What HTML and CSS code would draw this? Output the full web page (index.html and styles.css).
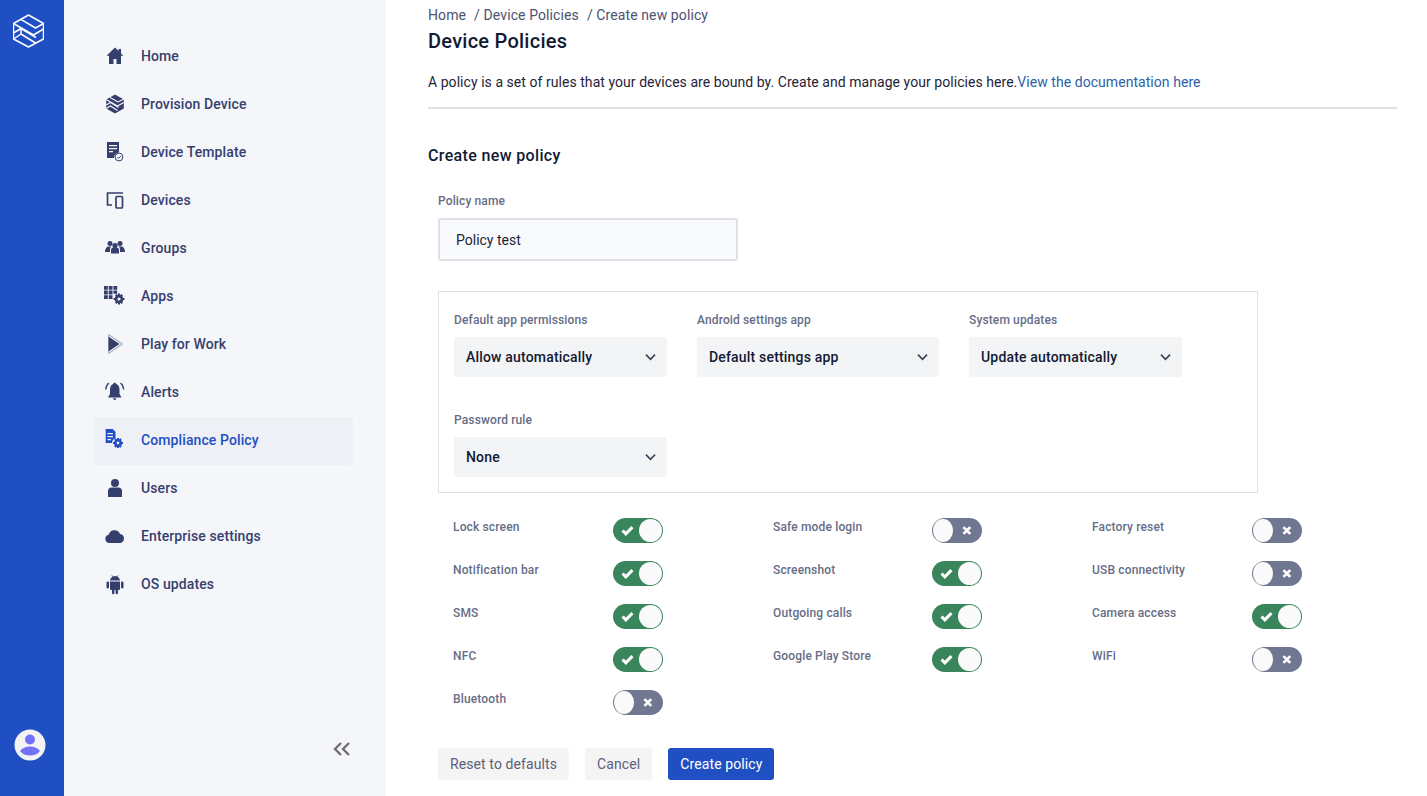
FILE: index.html

```html
<!DOCTYPE html>
<html lang="en">
<head>
	<meta charset="utf-8">
	<title>Device Policies</title>
	<link rel="stylesheet" href="styles.css">
</head>
<body>
	<div class="app">
		<aside class="rail">
			<svg class="logo" viewBox="0 0 31 34" width="31" height="34" fill="none" stroke="#fff" stroke-width="1.500" stroke-linejoin="round">
				<path d="M15.500 1 30.500 9.500V25L15.500 33 .5 25V9.500Z"/>
				<path d="M.5 9.500 20.500 21 30.500 15M7.500 5.200 22.500 14 30.500 9.500M.5 19 8 14.500 23 23.500M8 14.500V20M.5 25 8 20 22.500 29"/>
			</svg>
			<svg class="avatar" viewBox="0 0 32 32" width="32" height="32">
				<circle cx="16" cy="16" r="15.500" fill="#f3f3f5"/>
				<circle cx="16" cy="10.500" r="5" fill="#7272f8"/>
				<path d="M6 22c2-3 6-4.500 10-4.500s8 1.500 10 4.500c-2 3-6 4.500-10 4.500S8 25 6 22Z" fill="#7272f8"/>
			</svg>
		</aside>

		<nav class="sidebar">
			<ul class="nav">
				<li class="nav-item">
					<svg class="nav-icon" viewBox="0 0 20 20"><path d="M10 1.500 1.500 9.800H4V18h4.500v-5h3v5H16V9.800h2.500L16 7.400V3h-2.500v2Z"/></svg>
					Home
				</li>
				<li class="nav-item">
					<svg class="nav-icon" viewBox="0 0 20 20" fill="none"><path d="M10 .5 18.800 5.400V14.600L10 19.500 1.200 14.600V5.400Z" fill="currentColor"/><path d="M1.200 5.500 12.500 12 18.800 8.500M1.200 11 5.500 8.500 13.500 13.500M1.200 14.500 5.500 12 12.500 16.500M5 3.500 13 8 18.800 5" stroke="#f5f6f9" stroke-width="1.100"/></svg>
					Provision Device
				</li>
				<li class="nav-item">
					<svg class="nav-icon" viewBox="0 0 20 20"><path d="M2 0h12v10.600a5 5 0 0 0-5 5.400H2ZM4 3v1.300h8V3Zm0 3v1.300h8V6Zm0 3v1.300h4V9Z"/><circle cx="14" cy="15" r="3.900" fill="none" stroke="currentColor"/><path d="m12.300 15 1.300 1.300 2.300-2.300" fill="none" stroke="currentColor"/></svg>
					Device Template
				</li>
				<li class="nav-item">
					<svg class="nav-icon" viewBox="0 0 20 20" fill="none"><path d="M18 3H2.500v12H7" stroke="currentColor" stroke-width="1.700" fill="none"/><rect x="11" y="6.500" width="6.500" height="11.500" rx="1" stroke="currentColor" stroke-width="1.700" fill="none"/></svg>
					Devices
				</li>
				<li class="nav-item">
					<svg class="nav-icon" viewBox="0 0 20 20"><circle cx="5" cy="5.500" r="2.500"/><circle cx="15" cy="5.500" r="2.500"/><circle cx="10" cy="7.500" r="2.600"/><path d="M0 14c0-3 1.500-5.500 3.500-5.500h2.700A4 4 0 0 0 5 11v3ZM20 14c0-3-1.500-5.500-3.500-5.500h-2.700A4 4 0 0 1 15 11v3ZM6 15.500V12c0-1.500 1-2.500 2.500-2.500h3c1.500 0 2.500 1 2.500 2.500v3.500Z"/></svg>
					Groups
				</li>
				<li class="nav-item">
					<svg class="nav-icon" viewBox="0 0 20 20"><path d="M-1 0h3.800v3.800H-1ZM3.700 0h3.800v3.800H3.700ZM8.400 0h3.800v3.800H8.400ZM-1 4.600h3.800v3.800H-1ZM3.700 4.600h3.800v3.800H3.700ZM8.400 4.600h3.800v3.200H8.400ZM-1 9.200h3.800V13H-1ZM3.700 9.200h3.800V13H3.700Z"/><circle cx="14" cy="13" r="3" fill="none" stroke="currentColor" stroke-width="2.800"/><path d="M13 7.500h2v2h-2ZM13 16.500h2v2h-2ZM8.500 12h2v2h-2ZM17.500 12h2v2h-2ZM10 9.500l1.400-1.400 1.400 1.400-1.400 1.400ZM18 9.500l-1.400-1.400-1.400 1.400 1.400 1.400ZM10 16.500l1.400 1.400 1.400-1.400-1.400-1.400ZM18 16.500l-1.400 1.400-1.400-1.400 1.400-1.400Z"/></svg>
					Apps
				</li>
				<li class="nav-item">
					<svg class="nav-icon" viewBox="0 0 20 20"><path d="M3.500 0v20L18 10ZM4.300 1.600 16.500 10 4.300 18.400Z" opacity=".55"/><path d="M3.500 2.500v15L14.500 10Z"/></svg>
					Play for Work
				</li>
				<li class="nav-item">
					<svg class="nav-icon" viewBox="0 0 20 20"><path d="M9.700.7c1 0 1.500.7 1.500 1.400 2.300.7 3.300 3 3.300 5.400v4.500l2 3.500H3l2-3.500V7.500c0-2.400 1-4.700 3.200-5.400C8.200 1.400 8.700.7 9.700.7ZM8 16.300h3.400a1.700 1.700 0 0 1-3.400 0Z"/><path d="M3.800 1C1.800 2.800.8 5 .8 7.500M15.600 1c2 1.800 3 4 3 6.500" fill="none" stroke="currentColor" stroke-width="1.300"/></svg>
					Alerts
				</li>
				<li class="nav-item active">
					<svg class="nav-icon" viewBox="0 0 20 20"><path d="M.7-1h7l2.800 2.800v6.400A5.500 5.500 0 0 0 7 13H.7ZM2.500 3v1.200H8V3Zm0 3v1.200H8V6Zm0 3v1.200h3.500V9Z"/><circle cx="13" cy="13" r="2.700" fill="none" stroke="currentColor" stroke-width="2.600"/><path d="M12 8h2v2h-2ZM12 16h2v2h-2ZM8 12h2v2H8ZM16 12h2v2h-2ZM9.300 9.600l1.300-1.300 1.300 1.300-1.300 1.300ZM16.700 9.600l-1.300-1.300-1.300 1.300 1.300 1.300ZM9.300 16.400l1.300 1.300 1.300-1.300-1.300-1.300ZM16.700 16.400l-1.300 1.300-1.300-1.300 1.300-1.300Z"/></svg>
					Compliance Policy
				</li>
				<li class="nav-item">
					<svg class="nav-icon" viewBox="0 0 20 20"><circle cx="10" cy="5" r="4"/><path d="M3 19v-6c0-2 1.500-3.500 3.500-3.500h7C15.500 9.500 17 11 17 13v6Z"/></svg>
					Users
				</li>
				<li class="nav-item">
					<svg class="nav-icon" viewBox="0 0 20 20"><path d="M4.500 17a4.200 4.200 0 0 1-.8-8.300A6 6 0 0 1 15 8a4.600 4.600 0 0 1 .5 9Z"/></svg>
					Enterprise settings
				</li>
				<li class="nav-item">
					<svg class="nav-icon android" viewBox="0 0 20 20"><path d="M5 6.500a5 5 0 0 1 2.400-3.800L6.500 1.200l.4-.3 1 1.500a5 5 0 0 1 4.200 0l1-1.500.4.300-.9 1.500A5 5 0 0 1 15 6.500ZM5 7.500h10V15a1 1 0 0 1-1 1h-1v3a1.200 1.200 0 0 1-2.400 0v-3H9.400v3A1.200 1.200 0 0 1 7 19v-3H6a1 1 0 0 1-1-1ZM2.700 7.500A1.200 1.200 0 0 1 4 8.700v4.600a1.200 1.200 0 0 1-2.500 0V8.700a1.200 1.200 0 0 1 1.200-1.200ZM17.300 7.500a1.200 1.200 0 0 1 1.200 1.200v4.600a1.200 1.200 0 0 1-2.500 0V8.700a1.200 1.200 0 0 1 1.300-1.200Z"/></svg>
					OS updates
				</li>
			</ul>
			<div class="collapse">
				<svg viewBox="0 0 18 14" width="18" height="14" fill="none" stroke="#6f6f6f" stroke-width="2.400"><path d="M8 1 2 7l6 6M16 1l-6 6 6 6"/></svg>
			</div>
		</nav>

		<main class="main">
			<div class="crumbs">
				<span>Home</span><span>/ Device Policies</span><span>/ Create new policy</span>
			</div>
			<h1 class="title">Device Policies</h1>
			<p class="intro">A policy is a set of rules that your devices are bound by. Create and manage your policies here.<a class="link" href="#">View the documentation here</a></p>
			<hr class="rule">
			<h2 class="subtitle">Create new policy</h2>

			<div class="form">
				<label class="label">Policy name</label>
				<div class="input">Policy test</div>

				<div class="panel">
					<div class="field">
						<label class="label">Default app permissions</label>
						<div class="select narrow">Allow automatically<svg class="chevron" viewBox="0 0 12 8"><path d="M1 1.500 6 6.500l5-5"/></svg></div>
					</div>
					<div class="field">
						<label class="label">Android settings app</label>
						<div class="select wide">Default settings app<svg class="chevron" viewBox="0 0 12 8"><path d="M1 1.500 6 6.500l5-5"/></svg></div>
					</div>
					<div class="field">
						<label class="label">System updates</label>
						<div class="select narrow">Update automatically<svg class="chevron" viewBox="0 0 12 8"><path d="M1 1.500 6 6.500l5-5"/></svg></div>
					</div>
					<div class="field">
						<label class="label">Password rule</label>
						<div class="select narrow">None<svg class="chevron" viewBox="0 0 12 8"><path d="M1 1.500 6 6.500l5-5"/></svg></div>
					</div>
				</div>

				<div class="toggles">
					<div class="toggle-row"><span class="toggle-label">Lock screen</span><span class="toggle on"><svg class="mark" viewBox="0 0 12 10"><path d="m1.500 5 3 3 6-6"/></svg><i class="knob"></i></span></div>
					<div class="toggle-row"><span class="toggle-label">Safe mode login</span><span class="toggle"><i class="knob"></i><svg class="mark" viewBox="0 0 10 10"><path d="m1.500 1.500 7 7m0-7-7 7"/></svg></span></div>
					<div class="toggle-row"><span class="toggle-label">Factory reset</span><span class="toggle"><i class="knob"></i><svg class="mark" viewBox="0 0 10 10"><path d="m1.500 1.500 7 7m0-7-7 7"/></svg></span></div>

					<div class="toggle-row"><span class="toggle-label">Notification bar</span><span class="toggle on"><svg class="mark" viewBox="0 0 12 10"><path d="m1.500 5 3 3 6-6"/></svg><i class="knob"></i></span></div>
					<div class="toggle-row"><span class="toggle-label">Screenshot</span><span class="toggle on"><svg class="mark" viewBox="0 0 12 10"><path d="m1.500 5 3 3 6-6"/></svg><i class="knob"></i></span></div>
					<div class="toggle-row"><span class="toggle-label">USB connectivity</span><span class="toggle"><i class="knob"></i><svg class="mark" viewBox="0 0 10 10"><path d="m1.500 1.500 7 7m0-7-7 7"/></svg></span></div>

					<div class="toggle-row"><span class="toggle-label">SMS</span><span class="toggle on"><svg class="mark" viewBox="0 0 12 10"><path d="m1.500 5 3 3 6-6"/></svg><i class="knob"></i></span></div>
					<div class="toggle-row"><span class="toggle-label">Outgoing calls</span><span class="toggle on"><svg class="mark" viewBox="0 0 12 10"><path d="m1.500 5 3 3 6-6"/></svg><i class="knob"></i></span></div>
					<div class="toggle-row"><span class="toggle-label">Camera access</span><span class="toggle on"><svg class="mark" viewBox="0 0 12 10"><path d="m1.500 5 3 3 6-6"/></svg><i class="knob"></i></span></div>

					<div class="toggle-row"><span class="toggle-label">NFC</span><span class="toggle on"><svg class="mark" viewBox="0 0 12 10"><path d="m1.500 5 3 3 6-6"/></svg><i class="knob"></i></span></div>
					<div class="toggle-row"><span class="toggle-label">Google Play Store</span><span class="toggle on"><svg class="mark" viewBox="0 0 12 10"><path d="m1.500 5 3 3 6-6"/></svg><i class="knob"></i></span></div>
					<div class="toggle-row"><span class="toggle-label">WiFi</span><span class="toggle"><i class="knob"></i><svg class="mark" viewBox="0 0 10 10"><path d="m1.500 1.500 7 7m0-7-7 7"/></svg></span></div>

					<div class="toggle-row"><span class="toggle-label">Bluetooth</span><span class="toggle"><i class="knob"></i><svg class="mark" viewBox="0 0 10 10"><path d="m1.500 1.500 7 7m0-7-7 7"/></svg></span></div>
				</div>

				<div class="actions">
					<button class="btn">Reset to defaults</button>
					<button class="btn">Cancel</button>
					<button class="btn primary">Create policy</button>
				</div>
			</div>
		</main>
	</div>
</body>
</html>
```

FILE: styles.css

```css
* {
	box-sizing: border-box;
}
html, body {
	height: 100%;
}
body {
	margin: 0;
	overflow: hidden;
	background: #fff;
	color: #121a33;
	font-family: Roboto, "Liberation Sans", sans-serif;
	font-size: 14px;
}
.app {
	display: flex;
	height: 796px;
}

/* blue strip */
.rail {
	width: 64px;
	flex: none;
	background: #1f4fc3;
	display: flex;
	flex-direction: column;
	align-items: flex-start;
	justify-content: space-between;
	padding: 14px 0 35px 13px;
}
.avatar {
	margin-left: 1px;
}

/* nav column */
.sidebar {
	width: 322px;
	flex: none;
	background: #f5f6f9;
	padding: 33px 33px 0 30px;
	display: flex;
	flex-direction: column;
	justify-content: space-between;
}
.nav {
	list-style: none;
	margin: 0;
	padding: 0;
}
.nav-item {
	display: flex;
	align-items: center;
	gap: 16px;
	height: 48px;
	padding: 0 0 2px 11px;
	border-radius: 4px;
	color: #353f6e;
	font-weight: 500;
	font-size: 14px;
	letter-spacing: .1px;
}
.nav-item.active {
	background: #eff0f5;
	color: #1f4fc3;
}
.nav-icon {
	width: 20px;
	height: 20px;
	flex: none;
	fill: currentColor;
	overflow: visible;
}
.collapse {
	display: flex;
	justify-content: flex-end;
	padding: 0 2px 40px 0;
}

/* content */
.main {
	flex: 1;
	padding: 7px 30px 0 42px;
}
.crumbs {
	display: flex;
	gap: 8px;
	color: #4c5270;
	line-height: 17px;
	letter-spacing: .1px;
}
.title {
	margin: 4px 0 0;
	font-size: 20px;
	line-height: 26px;
	font-weight: 500;
	color: #121a33;
	letter-spacing: .25px;
}
.intro {
	margin: 19px 0 0;
	line-height: 18px;
	color: #1e2438;
	letter-spacing: .05px;
}
.link {
	color: #2c62a8;
	text-decoration: none;
}
.rule {
	margin: 16px 0 0;
	border: 0;
	border-top: 2px solid #e0e1e5;
}
.subtitle {
	margin: 36px 0 0;
	font-size: 16px;
	line-height: 22px;
	font-weight: 500;
	color: #121a33;
	letter-spacing: .35px;
}
.form {
	margin-top: 26px;
	padding-left: 10px;
}
.label {
	display: block;
	font-size: 12px;
	line-height: 16px;
	font-weight: 500;
	color: #676d87;
	letter-spacing: .13px;
}
.input {
	width: 300px;
	height: 43px;
	margin-top: 9px;
	padding-left: 16px;
	display: flex;
	align-items: center;
	background: #f9fafc;
	border: 2px solid #e0e1e8;
	border-radius: 3px;
	color: #1e2438;
}
.panel {
	width: 820px;
	height: 202px;
	margin-top: 30px;
	padding: 20px 15px 0;
	border: 1px solid #e0e1e5;
	display: flex;
	flex-wrap: wrap;
	column-gap: 30px;
	row-gap: 35px;
	align-content: flex-start;
}
.field .label {
	margin-bottom: 9px;
}
.select {
	height: 40px;
	padding: 0 11px 0 12px;
	display: flex;
	align-items: center;
	justify-content: space-between;
	background: #f3f4f6;
	border-radius: 3px;
	color: #121a33;
	font-weight: 500;
	letter-spacing: .18px;
}
.select.narrow {
	width: 213px;
}
.select.wide {
	width: 242px;
}
.chevron {
	width: 11px;
	height: 8px;
	fill: none;
	stroke: #3d4356;
	stroke-width: 1.800;
}

/* toggle grid */
.toggles {
	display: grid;
	grid-template-columns: 210px 209px 210px;
	column-gap: 110px;
	row-gap: 18px;
	margin-top: 25px;
	padding-left: 15px;
}
.toggle-row {
	display: flex;
	justify-content: space-between;
	height: 25px;
}
.toggle-label {
	font-size: 12px;
	line-height: 18px;
	font-weight: 500;
	color: #676d87;
	letter-spacing: .15px;
}
.toggle {
	width: 50px;
	height: 25px;
	border-radius: 13px;
	background: #6f7791;
	padding: 1px;
	display: flex;
	align-items: center;
	justify-content: space-between;
}
.toggle.on {
	background: #39855c;
}
.knob {
	width: 23px;
	height: 23px;
	border-radius: 50%;
	background: #fafafa;
}
.mark {
	width: 11px;
	height: 11px;
	margin: 0 9px;
	fill: none;
	stroke: #fff;
	stroke-width: 2.800;
}
.toggle.on .mark {
	width: 15px;
	margin: 0 0 0 6px;
}

.actions {
	display: flex;
	gap: 16px;
	margin-top: 33px;
}
.btn {
	height: 32px;
	padding: 0 12px;
	border: 0;
	border-radius: 3px;
	background: #f4f4f5;
	color: #5a6079;
	font-family: inherit;
	font-size: 14px;
	letter-spacing: .1px;
}
.btn.primary {
	background: #1f4fc3;
	color: #fff;
}
```
